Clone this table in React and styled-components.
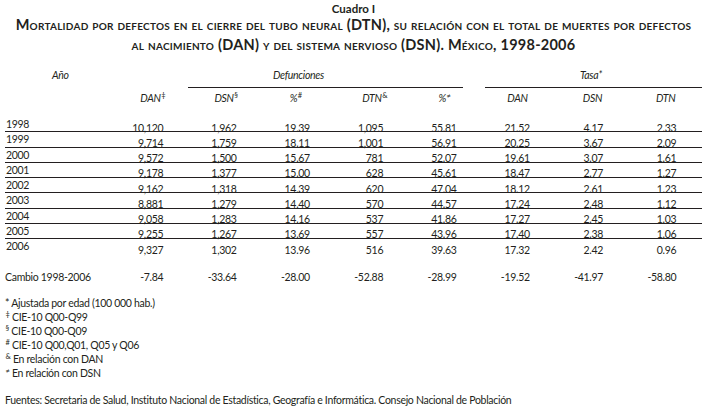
import React from "react";
import styled, { createGlobalStyle } from "styled-components";

const FONT = "Lato, 'Noto Sans', 'DejaVu Sans', sans-serif";
const INK = "#231f20";

const GlobalStyle = createGlobalStyle`
  html, body { margin: 0; padding: 0; background: #ffffff; }
  body { font-family: ${FONT}; color: ${INK}; }
`;

const Page = styled.div`
  width: 708px;
  height: 411px;
  overflow: hidden;
  box-sizing: border-box;
  padding: 0 6px 0 5px;
  letter-spacing: -0.3px;
`;

const Caption = styled.div`
  text-align: center;
  font-weight: 700;
  font-size: 11.5px;
  line-height: 13px;
  padding-top: 2px;
  letter-spacing: 0;
`;

const Title = styled.div`
  text-align: center;
  font-weight: 700;
  font-size: 14.5px;
  line-height: 20px;
  font-variant: small-caps;
  letter-spacing: 0.25px;
  white-space: nowrap;
`;

const GroupRow = styled.div`
  display: flex;
  margin-top: 11px;
  font-style: italic;
  font-size: 10.5px;
  line-height: 18px;
`;

const GroupLabel = styled.div`
  width: ${(p) => p.$width}px;
  margin-left: ${(p) => p.$left || 0}px;
  padding-left: ${(p) => p.$pad}px;
  padding-bottom: 3px;
  box-sizing: border-box;
  border-bottom: ${(p) => (p.$rule ? `1px solid ${INK}` : "1px solid transparent")};
`;

const Grid = styled.div`
  display: grid;
  grid-template-columns: 85px repeat(8, 73.3px) 1fr;
  width: 697px;
`;

const HeadRow = styled(Grid)`
  margin-top: 2px;
  font-style: italic;
  font-size: 10.5px;
  line-height: 16px;
`;

const HeadCell = styled.div`
  text-align: right;
  margin-right: ${(p) => p.$nudge || 0}px;
  white-space: nowrap;
`;

const Sup = styled.sup`
  font-size: 7.5px;
  line-height: 0;
  vertical-align: 4px;
  margin-left: 0.5px;
  font-style: normal;
`;

const Body = styled.div`
  margin-top: 11px;
`;

const DataRow = styled(Grid)`
  height: 15.25px;
  box-sizing: border-box;
  border-bottom: ${(p) => (p.$last ? "none" : `1px solid ${INK}`)};
  font-size: 10.5px;
  line-height: 14px;
  align-items: start;
`;

const YearCell = styled.div`
  padding-left: 1px;
`;

const NumCell = styled.div`
  text-align: right;
  padding-top: 3.5px;
  white-space: nowrap;
`;

const ChangeRow = styled(Grid)`
  margin-top: 16px;
  font-size: 10.5px;
  line-height: 14px;
`;

const ChangeLabel = styled.div`
  white-space: nowrap;
`;

const Notes = styled.div`
  margin-top: 12px;
  font-size: 10.5px;
  line-height: 14px;
`;

const Note = styled.div`
  white-space: nowrap;
`;

const Source = styled.div`
  margin-top: 13px;
  font-size: 10.5px;
  line-height: 14px;
  white-space: nowrap;
`;

const rows = [
  ["1998", "10,120", "1,962", "19.39", "1,095", "55.81", "21.52", "4.17", "2.33"],
  ["1999", "9,714", "1,759", "18.11", "1,001", "56.91", "20.25", "3.67", "2.09"],
  ["2000", "9,572", "1,500", "15.67", "781", "52.07", "19.61", "3.07", "1.61"],
  ["2001", "9,178", "1,377", "15.00", "628", "45.61", "18.47", "2.77", "1.27"],
  ["2002", "9,162", "1,318", "14.39", "620", "47.04", "18.12", "2.61", "1.23"],
  ["2003", "8,881", "1,279", "14.40", "570", "44.57", "17.24", "2.48", "1.12"],
  ["2004", "9,058", "1,283", "14.16", "537", "41.86", "17.27", "2.45", "1.03"],
  ["2005", "9,255", "1,267", "13.69", "557", "43.96", "17.40", "2.38", "1.06"],
  ["2006", "9,327", "1,302", "13.96", "516", "39.63", "17.32", "2.42", "0.96"],
];

const change = ["-7.84", "-33.64", "-28.00", "-52.88", "-28.99", "-19.52", "-41.97", "-58.80"];

const heads = [
  { label: "DAN", sup: "‡", nudge: -2 },
  { label: "DSN", sup: "§", nudge: -1 },
  { label: "%", sup: "#", nudge: 8 },
  { label: "DTN", sup: "&", nudge: -4 },
  { label: "%", sup: "≠", nudge: 6 },
  { label: "DAN", nudge: 2 },
  { label: "DSN", nudge: 1 },
  { label: "DTN", nudge: 1 },
];

const notes = [
  { mark: "*", text: " Ajustada por edad (100 000 hab.)", plain: true },
  { mark: "‡", text: " CIE-10 Q00-Q99" },
  { mark: "§", text: " CIE-10 Q00-Q09" },
  { mark: "#", text: " CIE-10 Q00,Q01, Q05 y Q06" },
  { mark: "&", text: " En relación con DAN" },
  { mark: "≠", text: " En relación con DSN" },
];

export default function App() {
  return (
    <>
      <GlobalStyle />
      <Page>
        <Caption>Cuadro I</Caption>
        <Title>
          <div>Mortalidad por defectos en el cierre del tubo neural (DTN), su relación con el total de muertes por defectos</div>
          <div>al nacimiento (DAN) y del sistema nervioso (DSN). México, 1998-2006</div>
        </Title>

        <GroupRow>
          <GroupLabel $width={183} $pad={47}>Año</GroupLabel>
          <GroupLabel $width={275} $pad={85} $rule>Defunciones</GroupLabel>
          <GroupLabel $width={217} $left={22} $pad={95} $rule>
            Tasa*
          </GroupLabel>
        </GroupRow>

        <HeadRow>
          <div />
          {heads.map((h, i) => (
            <HeadCell key={i} $nudge={h.nudge}>
              {h.label}
              {h.sup && <Sup>{h.sup}</Sup>}
            </HeadCell>
          ))}
        </HeadRow>

        <Body>
          {rows.map((r, i) => (
            <DataRow key={r[0]} $last={i === rows.length - 1}>
              <YearCell>{r[0]}</YearCell>
              {r.slice(1).map((v, j) => (
                <NumCell key={j}>{v}</NumCell>
              ))}
            </DataRow>
          ))}
        </Body>

        <ChangeRow>
          <ChangeLabel>Cambio 1998-2006</ChangeLabel>
          {change.map((v, j) => (
            <HeadCell key={j}>{v}</HeadCell>
          ))}
        </ChangeRow>

        <Notes>
          {notes.map((n, i) => (
            <Note key={i}>
              {n.plain ? n.mark : <Sup>{n.mark}</Sup>}
              {n.text}
            </Note>
          ))}
        </Notes>

        <Source>
          Fuentes: Secretaria de Salud, Instituto Nacional de Estadística, Geografía e Informática. Consejo Nacional de Población
        </Source>
      </Page>
    </>
  );
}
